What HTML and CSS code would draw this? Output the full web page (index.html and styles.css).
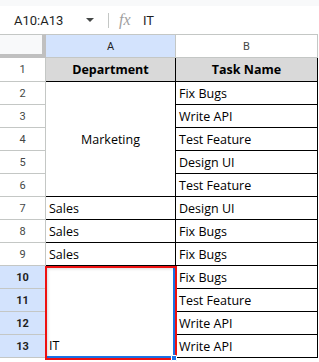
FILE: index.html
```html
<!DOCTYPE html>
<html>
<head>
<meta charset="utf-8">
<link rel="stylesheet" href="styles.css">
</head>
<body>
<div class="toolbar">
  <div class="strip"></div>
  <div class="bar">
    <span class="namebox">A10:A13</span>
    <svg class="caret" width="8" height="4" viewBox="0 0 8 4"><path d="M0 0h8L4 4z" fill="#444746"/></svg>
    <span class="sep"></span>
    <span class="fx">fx</span>
    <span class="formula">IT</span>
  </div>
</div>
<div class="sheet">
  <div class="corner"></div>
  <div class="colhdr sel">A</div>
  <div class="colhdr">B</div>

  <div class="rowhdr">1</div>
  <div class="cell head a">Department</div>
  <div class="cell head b">Task Name</div>

  <div class="rowhdr">2</div>
  <div class="cell a merge5 center">Marketing</div>
  <div class="cell b">Fix Bugs</div>
  <div class="rowhdr">3</div>
  <div class="cell b">Write API</div>
  <div class="rowhdr">4</div>
  <div class="cell b">Test Feature</div>
  <div class="rowhdr">5</div>
  <div class="cell b">Design UI</div>
  <div class="rowhdr">6</div>
  <div class="cell b">Test Feature</div>

  <div class="rowhdr">7</div>
  <div class="cell a">Sales</div>
  <div class="cell b">Design UI</div>
  <div class="rowhdr">8</div>
  <div class="cell a">Sales</div>
  <div class="cell b">Fix Bugs</div>
  <div class="rowhdr">9</div>
  <div class="cell a">Sales</div>
  <div class="cell b">Fix Bugs</div>

  <div class="rowhdr sel">10</div>
  <div class="cell a merge4 bottom">IT</div>
  <div class="cell b">Fix Bugs</div>
  <div class="rowhdr sel">11</div>
  <div class="cell b">Test Feature</div>
  <div class="rowhdr sel">12</div>
  <div class="cell b">Write API</div>
  <div class="rowhdr sel">13</div>
  <div class="cell b">Write API</div>

  <div class="selection"></div>
  <div class="highlight"></div>
  <div class="handle"></div>
</div>
</body>
</html>
```
FILE: styles.css
```css
* { box-sizing: border-box; }
html, body { margin: 0; padding: 0; background: #fff; }
body { width: 319px; height: 362px; overflow: hidden; font-family: Roboto, "Liberation Sans", sans-serif; }

.toolbar { height: 34px; }
.strip { height: 6px; background: #f8f9fa; }
.bar { height: 28px; display: flex; align-items: center; }
.namebox { margin-left: 14px; font-size: 13px; color: #1f1f1f; width: 72px; }
.caret { display: block; }
.sep { width: 1px; height: 15px; background: #c4c7c5; margin-left: 14px; }
.fx { margin-left: 10px; font-family: "Liberation Serif", serif; font-style: italic; font-size: 16px; color: #a0a0a0; width: 24px; }
.formula { font-size: 13px; color: #1f1f1f; }

.sheet {
  position: relative;
  display: grid;
  grid-template-columns: 46px 130px 142px;
  grid-template-rows: 24px 24px repeat(12, 23px);
}

.corner {
  background: #f8f9fa;
  border-top: 1px solid #c4c7c5;
  border-right: 4px solid #c0c0c0;
  border-bottom: 4px solid #c0c0c0;
}
.colhdr {
  display: flex; align-items: center; justify-content: center;
  border-top: 1px solid #c4c7c5;
  border-right: 1px solid #c4c7c5;
  border-bottom: 1px solid #c4c7c5;
  font-size: 11px; color: #444746;
  background: #fff;
}
.colhdr.sel { background: #d3e3fd; color: #1f1f1f; }

.rowhdr {
  display: flex; align-items: center; justify-content: center;
  border-right: 1px solid #c4c7c5;
  border-bottom: 1px solid #c4c7c5;
  font-size: 11px; color: #444746;
}
.rowhdr.sel { background: #d3e3fd; color: #1f1f1f; font-weight: bold; }

.cell {
  display: flex; align-items: center;
  padding-left: 3px;
  border-right: 1px solid #000;
  border-bottom: 1px solid #000;
  font-family: "Open Sans", "Noto Sans", sans-serif;
  font-size: 12.5px; color: #000;
  white-space: nowrap; overflow: hidden;
}
.cell.head { background: #d9d9d9; font-weight: bold; justify-content: center; padding-left: 0; }
.cell.center { justify-content: center; padding-left: 0; }
.merge5 { grid-row: span 5; }
.merge4 { grid-row: span 4; }
.cell.bottom { align-items: flex-end; padding-bottom: 3px; }

.selection {
  position: absolute; left: 45px; top: 232px; width: 130px; height: 92px;
  border: 2px solid #1a73e8;
}
.highlight {
  position: absolute; left: 45px; top: 232px; width: 132px; height: 94px;
  border: 2px solid #ee1111;
  box-shadow: inset 1px 1px 3px rgba(0,0,0,0.15);
}
.handle {
  position: absolute; left: 171px; top: 321px; width: 6px; height: 6px;
  background: #1a73e8; border: 1px solid #fff; border-radius: 1px;
}
```
